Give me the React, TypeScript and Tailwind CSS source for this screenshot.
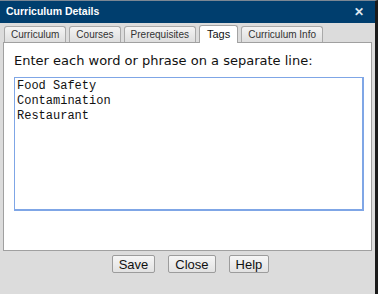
import React from "react";

const tabs = ["Curriculum", "Courses", "Prerequisites", "Tags", "Curriculum Info"];

export default function App() {
  const active = "Tags";

  return (
    <div className="w-[378px] h-[294px] bg-[#dcdcdc] flex flex-col border-t border-[#7b8794] border-r-[3px] border-r-[#1b1b1b] font-['Liberation_Sans',Arial,sans-serif] overflow-hidden">
      {/* title bar */}
      <div className="h-[22px] shrink-0 bg-[#003e6e] flex items-center justify-between pl-[6px] pr-[11px]">
        <span className="text-white text-[10.5px] font-bold">Curriculum Details</span>
        <span className="text-[#dfe7ef] text-[12px] font-bold leading-none">✕</span>
      </div>

      {/* tabs */}
      <div className="flex items-end gap-[3px] pl-[4px] h-[19px] shrink-0">
        {tabs.map((t) =>
          t === active ? (
            <div
              key={t}
              className="h-[18px] px-[7px] bg-white border border-b-0 border-[#a3a3a3] rounded-t-[3px] text-[11px] text-[#111] flex items-center -mb-px relative z-10"
            >
              {t}
            </div>
          ) : (
            <div
              key={t}
              className="h-[16px] px-[6px] bg-gradient-to-b from-[#f4f4f4] to-[#dedede] border border-b-0 border-[#a9a9a9] rounded-t-[3px] text-[10px] text-[#333] flex items-center"
            >
              {t}
            </div>
          )
        )}
      </div>

      {/* panel */}
      <div className="mx-[3px] h-[209px] shrink-0 bg-white border border-[#a0a0a0] flex flex-col pl-[10px] pr-[8px] pt-[10px]">
        <p className="text-[13px] font-['DejaVu_Sans',Verdana,sans-serif] text-[#111] leading-[15px] mb-[9px]">
          Enter each word or phrase on a separate line:
        </p>
        <div className="w-[350px] h-[134px] border border-[#7fa6e6] border-r-2 border-b-2 px-[2px] py-[1px] font-['Liberation_Mono','Courier_New',monospace] text-[12px] leading-[15px] text-[#111]">
          <div>Food Safety</div>
          <div>Contamination</div>
          <div>Restaurant</div>
        </div>
      </div>

      {/* footer */}
      <div className="flex justify-center gap-[13px] pt-[4px] pl-[6px]">
        {["Save", "Close", "Help"].map((b) => (
          <button
            key={b}
            className="h-[18px] px-[6px] bg-gradient-to-b from-[#f6f6f6] to-[#e2e2e2] border border-[#9c9c9c] rounded-[2px] text-[13px] text-[#111] leading-none"
          >
            {b}
          </button>
        ))}
      </div>
    </div>
  );
}
